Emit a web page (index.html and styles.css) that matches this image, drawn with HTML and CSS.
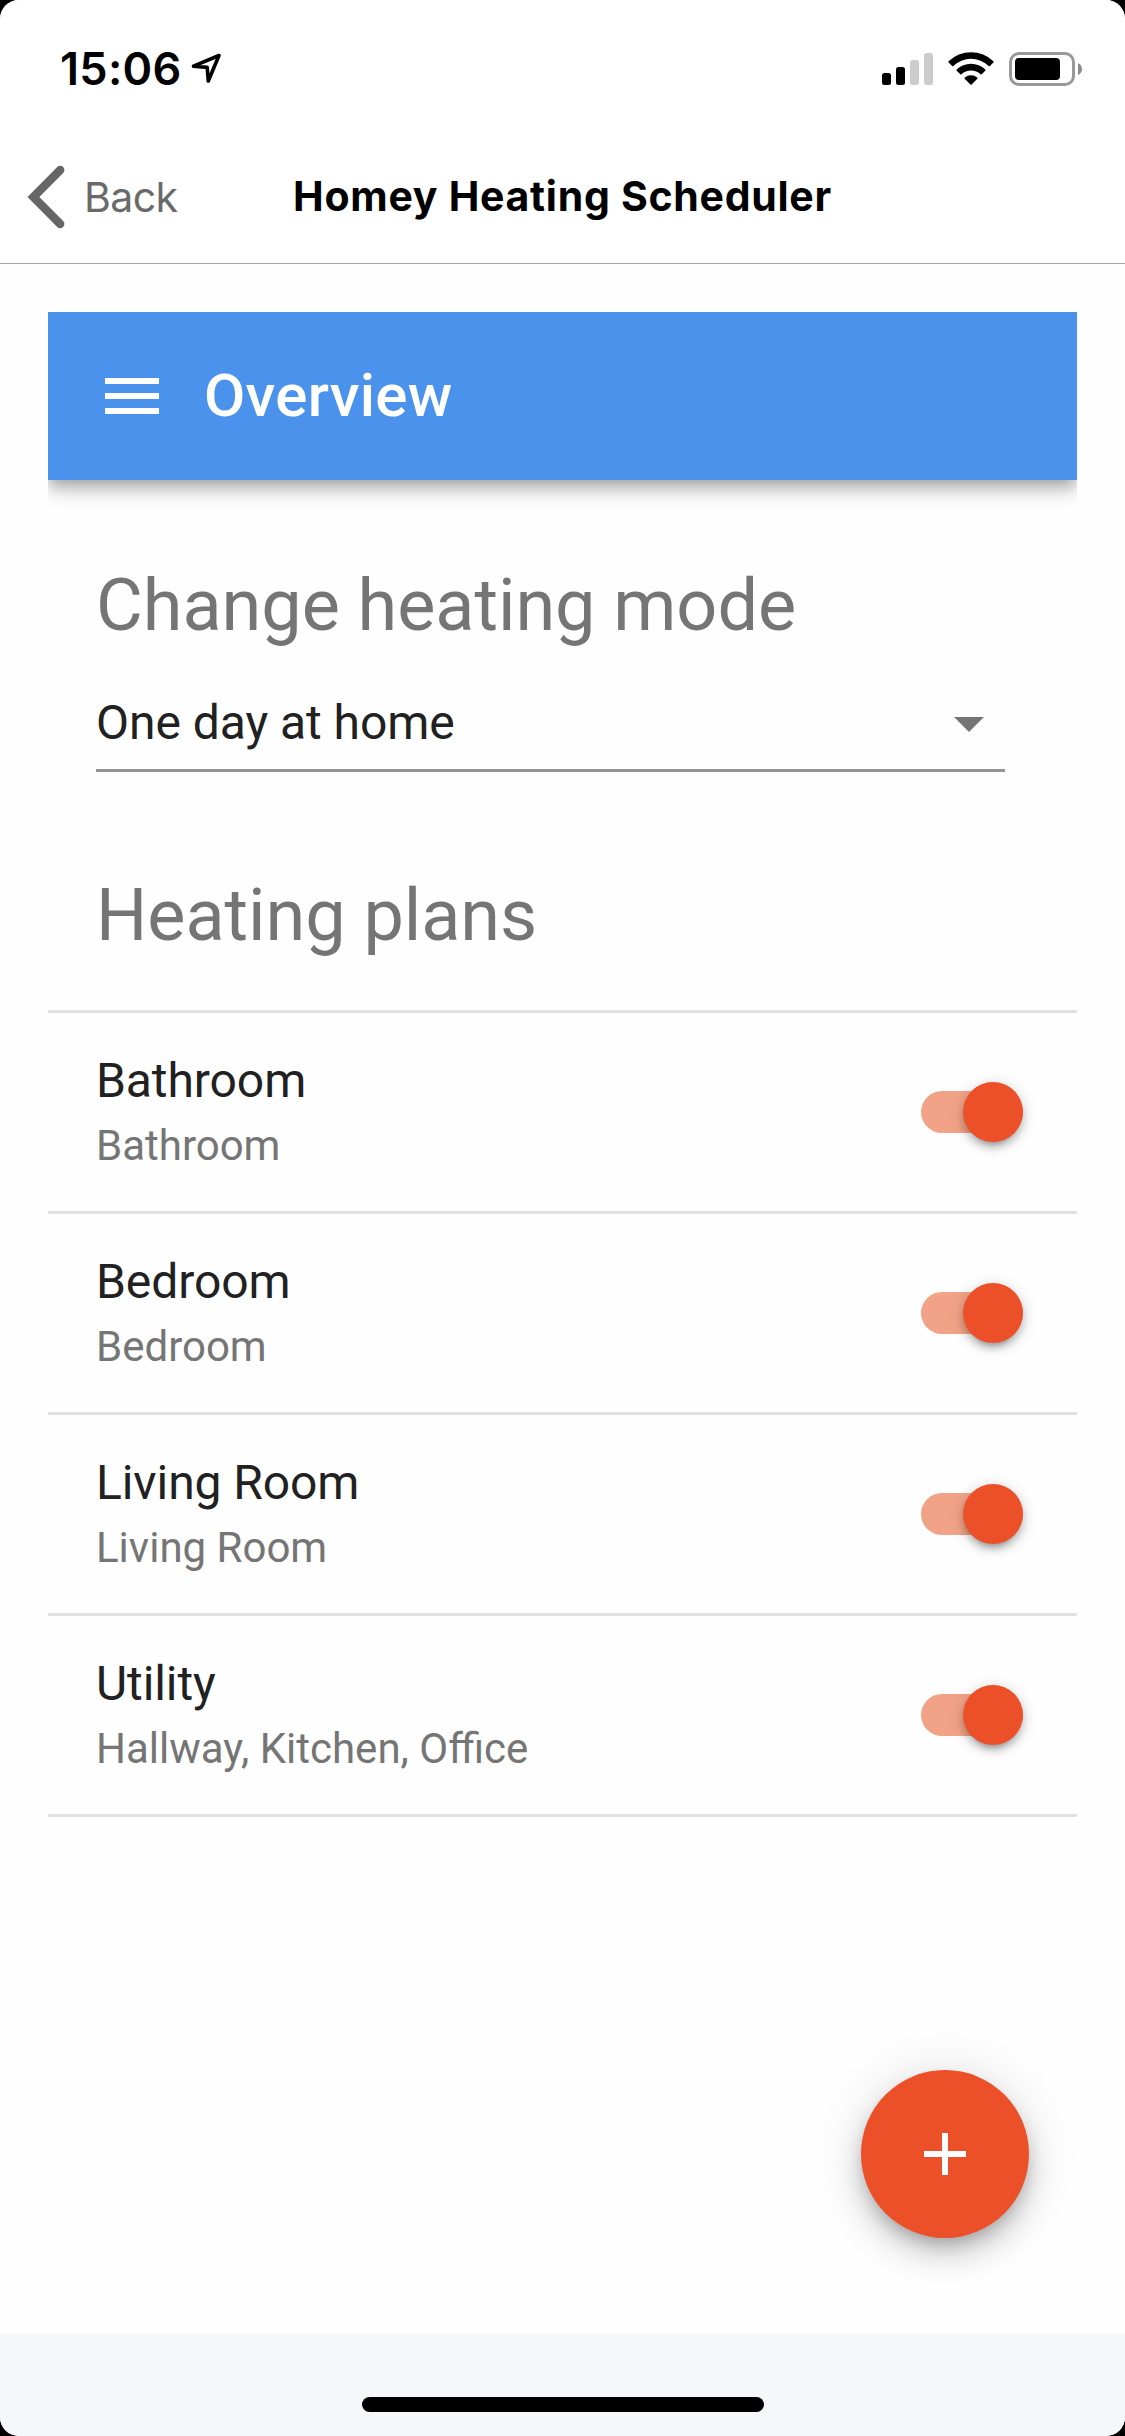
FILE: index.html
```html
<!DOCTYPE html>
<html lang="en">
<head>
<meta charset="utf-8">
<title>Homey Heating Scheduler</title>
<link rel="stylesheet" href="styles.css">
</head>
<body>
<div class="screen">
  <div class="status">
    <span class="time">15:06</span>
    <svg class="location" width="31" height="31" viewBox="0 0 31 31"><path d="M2.5 13.2 L28 2.5 L17.3 28 L16.2 14.4 Z" fill="none" stroke="#000" stroke-width="3.6" stroke-linejoin="round"/></svg>
    <svg class="signal" width="51" height="32" viewBox="0 0 51 32"><rect y="20" width="9" height="12" rx="2.5"/><rect x="14" y="14" width="9" height="18" rx="2.5"/><g fill="#ccc"><rect x="28" y="7" width="9" height="25" rx="2.5"/><rect x="42" width="9" height="32" rx="2.5"/></g></svg>
    <svg class="wifi" width="46" height="33" viewBox="0 0 46 33"><path d="M.6 9.3 A32 32 0 0 1 45.4 9.3 Q45.9 9.9 45.4 10.5 L41.9 14 Q41.3 14.5 40.7 14 A25.5 25.5 0 0 0 5.3 14 Q4.7 14.5 4.1 14 L.6 10.5 Q.1 9.9 .6 9.3Z"/><path d="M8.7 17.5 A20.5 20.5 0 0 1 37.3 17.5 Q37.9 18.1 37.3 18.7 L33.7 22.2 Q33.1 22.7 32.5 22.2 A14 14 0 0 0 13.5 22.2 Q12.9 22.7 12.3 22.2 L8.7 18.7 Q8.1 18.1 8.7 17.5Z"/><path d="M16.8 25.6 A9.5 9.5 0 0 1 29.2 25.6 Q29.9 26.2 29.3 26.8 L23.6 32.5 Q23 33 22.4 32.5 L16.7 26.8 Q16.1 26.2 16.8 25.6Z"/></svg>
    <svg class="battery" width="74" height="34" viewBox="0 0 74 34"><rect x="1.5" y="1.5" width="63" height="31" rx="8.5" fill="none" stroke="#999" stroke-width="3"/><rect x="6" y="6" width="45" height="22" rx="4"/><path d="M69 11 Q73 13 73 17 Q73 21 69 23Z" fill="#8c8c8c"/></svg>
  </div>
  <header class="nav">
    <svg class="chevron" width="38" height="64" viewBox="0 0 38 64"><path d="M33.2 5 L6.4 32 L33.2 59" fill="none" stroke="#666" stroke-width="8.4" stroke-linecap="round"/></svg>
    <span class="back">Back</span>
    <h1 class="nav-title">Homey Heating Scheduler</h1>
  </header>
  <main class="app">
    <div class="appbar">
      <svg width="54" height="36" viewBox="0 0 54 36" fill="#fff"><path d="M0 0h54v6H0zM0 15h54v6H0zM0 30h54v6H0z"/></svg>
      <span class="appbar-title">Overview</span>
    </div>
    <h2 class="heading mode">Change heating mode</h2>
    <div class="select">
      <span class="value">One day at home</span>
      <svg width="30" height="15" viewBox="0 0 30 15" fill="#757575"><path d="M0 0h30L15 15z"/></svg>
    </div>
    <h2 class="heading plans">Heating plans</h2>
    <ul class="list">
      <li class="row"><div class="plan"><div class="name">Bathroom</div><div class="rooms">Bathroom</div></div><span class="switch"></span></li>
      <li class="row"><div class="plan"><div class="name">Bedroom</div><div class="rooms">Bedroom</div></div><span class="switch"></span></li>
      <li class="row"><div class="plan"><div class="name">Living Room</div><div class="rooms">Living Room</div></div><span class="switch"></span></li>
      <li class="row"><div class="plan"><div class="name">Utility</div><div class="rooms">Hallway, Kitchen, Office</div></div><span class="switch"></span></li>
    </ul>
    <div class="fab"><svg width="42" height="42" viewBox="0 0 42 42" fill="#fff"><path d="M18 0h6v18h18v6H24v18h-6V24H0v-6h18z"/></svg></div>
  </main>
  <footer class="bottom"><div class="home"></div></footer>
</div>
</body>
</html>
```
FILE: styles.css
```css
* { box-sizing: border-box; }
body { margin: 0; background: #000; }
.screen {
  width: 1125px; height: 2436px; overflow: hidden;
  display: flex; flex-direction: column;
  background: #fefefe; border-radius: 19px;
  font-family: Roboto, sans-serif;
}
.status {
  height: 132px; padding: 52px 42px 0 60px; background: #fff;
  display: flex; align-items: flex-start;
}
.time {
  width: 131px; white-space: nowrap;
  font: 600 45px/34px Inter, sans-serif; letter-spacing: .3px;
}
.location { margin-top: 1px; }
.signal { margin: 1px 15px 0 auto; }
.wifi { margin-right: 15px; }
.nav {
  position: relative; height: 132px; padding-left: 27px; background: #fff;
  display: flex; align-items: center;
  border-bottom: 1px solid #a7a7aa;
  font-family: Inter, sans-serif;
}
.chevron { margin-bottom: 1px; }
.back { margin: 0 0 2px 19px; font-size: 41px; letter-spacing: -.6px; color: #6a6a6a; }
.nav-title {
  position: absolute; left: 0; right: 0; top: 39px; margin: 0;
  text-align: center; font-size: 41px; font-weight: 700; line-height: 50px; letter-spacing: .72px;
}
.app {
  position: relative; height: 2022px; margin: 48px 48px 0;
  overflow: hidden;
}
.appbar {
  height: 168px; padding-left: 57px; background: #4a92ec; color: #fff;
  display: flex; align-items: center; gap: 45px;
  box-shadow: 0 6px 12px -3px rgba(0,0,0,.2), 0 12px 15px rgba(0,0,0,.14), 0 3px 30px rgba(0,0,0,.12);
}
.appbar-title { font-size: 60px; font-weight: 500; letter-spacing: .0045em; line-height: 96px; }
.heading {
  margin: 0 48px; font-size: 72px; font-weight: 400; line-height: 96px; letter-spacing: -.05px; color: #757575;
}
.mode { margin-top: 78px; }
.select {
  width: 909px; height: 96px; margin: 22px 0 0 48px; padding: 4px 21px 0 0;
  display: flex; align-items: center; justify-content: space-between;
  border-bottom: 3px solid #949494; font-size: 48px; color: #212121;
}
.value { padding-bottom: 5px; letter-spacing: -.05px; }
.plans { margin-top: 96px; }
.list { margin: 46px 0 0; padding: 0; list-style: none; border-top: 3px solid #e0e0e0; }
.row {
  height: 201px; padding: 0 54px 0 48px; border-bottom: 3px solid #e0e0e0;
  display: flex; align-items: center; justify-content: space-between;
}
.plan { padding-bottom: 4px; }
.name { font-size: 48px; line-height: 70px; letter-spacing: -.08px; color: #212121; }
.rooms { padding-top: 1px; font-size: 42px; line-height: 58px; color: #757575; }
.switch {
  position: relative; width: 102px; height: 42px; border-radius: 21px; background: #f2a387;
}
.switch::after {
  content: ""; position: absolute; right: 0; top: -9px; width: 60px; height: 60px;
  border-radius: 50%; background: #eb5028;
  box-shadow: 0 3px 15px rgba(0,0,0,.2), 0 6px 6px rgba(0,0,0,.14), 0 9px 3px -6px rgba(0,0,0,.12);
}
.fab {
  position: absolute; right: 48px; bottom: 96px; width: 168px; height: 168px;
  display: flex; align-items: center; justify-content: center;
  border-radius: 50%; background: #eb5028;
  box-shadow: 0 9px 15px -3px rgba(0,0,0,.2), 0 18px 30px rgba(0,0,0,.14), 0 3px 54px rgba(0,0,0,.12);
}
.bottom {
  flex: 1; padding-top: 63px; background: #f6f7f9;
  display: flex; justify-content: center;
}
.home { width: 402px; height: 15px; border-radius: 8px; background: #000; }
```
